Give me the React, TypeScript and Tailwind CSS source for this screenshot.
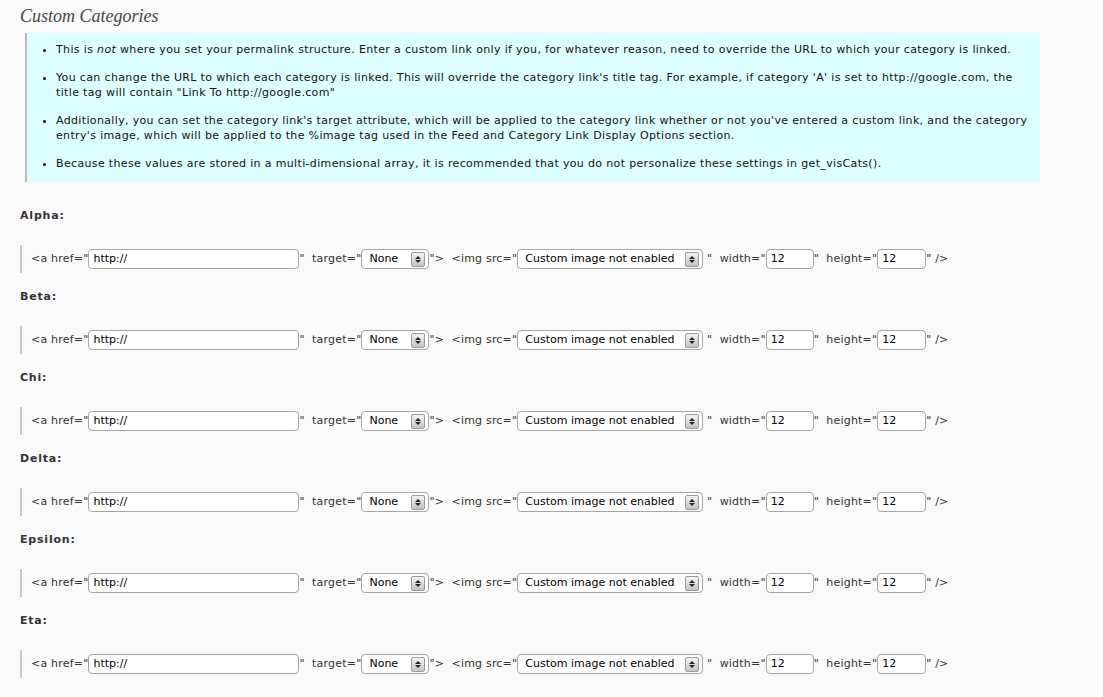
import React from 'react'

const NOTES: React.ReactNode[] = [
  <>
    This is <em>not</em> where you set your permalink structure. Enter a custom link only if you, for whatever reason, need to
    override the URL to which your category is linked.
  </>,
  <>
    You can change the URL to which each category is linked. This will override the category link's title tag. For example, if
    category 'A' is set to http://google.com, the title tag will contain "Link To http://google.com"
  </>,
  <>
    Additionally, you can set the category link's target attribute, which will be applied to the category link whether or not
    you've entered a custom link, and the category entry's image, which will be applied to the %image tag used in the Feed and
    Category Link Display Options section.
  </>,
  <>
    Because these values are stored in a multi-dimensional array, it is recommended that you do not personalize these settings in
    get_visCats().
  </>
]

const CATS = ['Alpha', 'Beta', 'Chi', 'Delta', 'Epsilon', 'Eta']

function Stepper() {
  return (
    <span className="ml-auto mr-[3px] flex h-[15px] w-[14px] flex-col items-center justify-center gap-[1px] rounded-[2px] border border-[#9a9a9a] bg-gradient-to-b from-[#f4f4f4] to-[#c4c4c4]">
      <span className="h-0 w-0 border-x-[3px] border-b-[3px] border-x-transparent border-b-[#222]" />
      <span className="h-0 w-0 border-x-[3px] border-t-[3px] border-x-transparent border-t-[#222]" />
    </span>
  )
}

function Select({ value, w }: { value: string; w: string }) {
  return (
    <span className={`flex h-[20px] items-center rounded-[4px] border border-[#a5a5a5] bg-white pl-[7px] tracking-normal text-black ${w}`}>
      {value}
      <Stepper />
    </span>
  )
}

function Field({ value, w }: { value: string; w: string }) {
  return (
    <span className={`flex h-[20px] items-center rounded-[4px] border border-[#a5a5a5] bg-white pl-[4px] tracking-normal text-black ${w}`}>
      {value}
    </span>
  )
}

function CategoryRow({ name }: { name: string }) {
  return (
    <div>
      <div className="mt-[17px] text-[11px] font-semibold leading-[14px] tracking-[0.8px] text-[#333]">{name}:</div>
      <div className="mt-[22px] flex h-[28px] items-center whitespace-pre border-l-2 border-[#c8c8c8] pl-[9px] text-[11px] tracking-[0.2px] text-[#333]">
        <span>{'<a href="'}</span>
        <Field value="http://" w="w-[211px]" />
        <span>{'"  target="'}</span>
        <Select value="None" w="w-[68px]" />
        <span>{'">  <img src="'}</span>
        <Select value="Custom image not enabled" w="w-[186px]" />
        <span>{' "  width="'}</span>
        <Field value="12" w="w-[48px]" />
        <span>{'"  height="'}</span>
        <Field value="12" w="w-[49px]" />
        <span>{'" />'}</span>
      </div>
    </div>
  )
}

export default function App() {
  return (
    <div className="min-h-[697px] bg-[#f9f9f9] pl-[20px] pt-[4px] pb-[20px] font-['DejaVu_Sans',sans-serif]">
      <h2 className="font-['Liberation_Serif',serif] text-[18px] italic leading-[24px] text-[#464646]">Custom Categories</h2>
      <div className="ml-[5px] mt-[5px] w-[1015px] border-l-2 border-[#bbb] bg-[#ddffff] pb-[11px] pl-[14px] pr-[10px] pt-[9px]">
        <ul className="list-disc pl-[15px] text-[11px] leading-[15px] tracking-[0.35px] text-[#111]">
          {NOTES.map((n, i) => (
            <li key={i} className={i > 0 ? 'mt-[13px]' : ''}>
              {n}
            </li>
          ))}
        </ul>
      </div>
      <div className="mt-[27px]">
        {CATS.map((c) => (
          <CategoryRow key={c} name={c} />
        ))}
      </div>
    </div>
  )
}
